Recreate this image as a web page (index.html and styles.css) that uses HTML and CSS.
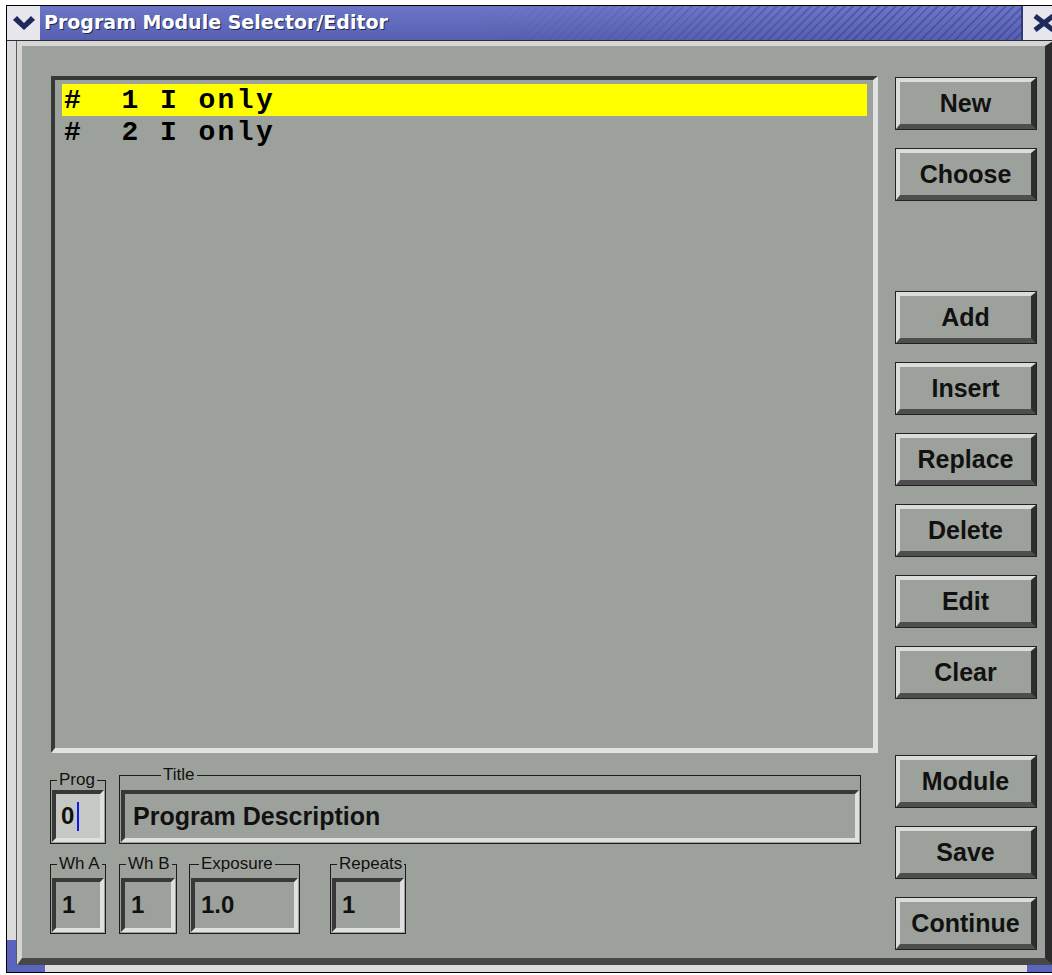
FILE: index.html
```html
<!DOCTYPE html>
<html lang="en">
<head>
<meta charset="utf-8">
<title>Program Module Selector/Editor</title>
<link rel="stylesheet" href="styles.css">
</head>
<body>
<div class="window">
  <div class="titlebar">
    <div class="tb-btn tb-menu">
      <svg width="22" height="14" viewBox="0 0 22 14"><path d="M0 4 4 0 11 7 18 0 22 4 11 14Z" fill="#1e2a5e"/></svg>
    </div>
    <div class="tb-title">Program Module Selector/Editor</div>
    <div class="tb-btn tb-close">
      <svg width="24" height="20" viewBox="0 0 24 20"><path d="M3 3 21 17M21 3 3 17" stroke="#1e2a5e" stroke-width="5"/></svg>
    </div>
  </div>
  <div class="frame">
    <span class="grip grip-bl"></span>
    <span class="grip grip-br"></span>
    <div class="dialog">
      <div class="main-col">
        <div class="listbox">
          <div class="row selected">#  1 I only</div>
          <div class="row">#  2 I only</div>
        </div>
        <div class="field-row row-top">
          <fieldset class="group g-prog">
            <legend>Prog</legend>
            <div class="entry focus">0<span class="caret"></span></div>
          </fieldset>
          <fieldset class="group g-title">
            <legend>Title</legend>
            <div class="entry entry-title">Program Description</div>
          </fieldset>
        </div>
        <div class="field-row row-bottom">
          <fieldset class="group g-wha">
            <legend>Wh A</legend>
            <div class="entry">1</div>
          </fieldset>
          <fieldset class="group g-whb">
            <legend>Wh B</legend>
            <div class="entry">1</div>
          </fieldset>
          <fieldset class="group g-exposure">
            <legend>Exposure</legend>
            <div class="entry">1.0</div>
          </fieldset>
          <fieldset class="group g-repeats">
            <legend>Repeats</legend>
            <div class="entry">1</div>
          </fieldset>
        </div>
      </div>
      <div class="btn-col">
        <button class="btn">New</button>
        <button class="btn">Choose</button>
        <button class="btn gap-lg">Add</button>
        <button class="btn">Insert</button>
        <button class="btn">Replace</button>
        <button class="btn">Delete</button>
        <button class="btn">Edit</button>
        <button class="btn">Clear</button>
        <button class="btn gap-md">Module</button>
        <button class="btn">Save</button>
        <button class="btn">Continue</button>
      </div>
    </div>
  </div>
</div>
</body>
</html>
```

FILE: styles.css
```css
html, body {
  margin: 0;
  background: #ffffff;
  overflow: hidden;
}

body {
  font-family: "Liberation Sans", Arial, sans-serif;
  color: #111;
}

/* window shell */
.window {
  margin: 5px 0 0 6px;
  width: 1046px;
  border: 1px solid #000;
  border-right: 0;
}

.titlebar {
  display: flex;
  height: 34px;
  border-bottom: 1px solid #2c2c3c;
  overflow: hidden;
}

.tb-btn {
  background: #e6e6ec;
  display: flex;
  align-items: center;
}

.tb-menu {
  width: 33px;
  justify-content: center;
}

.tb-close {
  width: 30px;
  padding-left: 9px;
  box-sizing: border-box;
  overflow: hidden;
}

.tb-close svg {
  flex: none;
}

.tb-title {
  flex: 1;
  position: relative;
  background: linear-gradient(#6c76c6, #5760b0);
  border-right: 2px solid #323a78;
  padding-left: 4px;
  color: #fff;
  font: bold 19px/33px "DejaVu Sans", sans-serif;
  text-shadow: 1px 1px 0 #232850;
  overflow: hidden;
}

/* diagonal hatch fading in towards the right end of the bar */
.tb-title::after {
  content: "";
  position: absolute;
  inset: 0;
  background: repeating-linear-gradient(135deg, transparent 0 4px, rgba(40, 48, 120, 0.35) 4px 6px);
  -webkit-mask-image: linear-gradient(90deg, transparent 45%, #000 85%);
  mask-image: linear-gradient(90deg, transparent 45%, #000 85%);
}

.frame {
  position: relative;
  display: flex;
  background: #dcdcdc;
  padding: 0 0 7px 10px;
}

.grip {
  position: absolute;
  bottom: 0;
  box-sizing: border-box;
}

.grip-bl {
  left: 0;
  width: 38px;
  height: 32px;
  border-left: 9px solid #5b65c0;
  border-bottom: 7px solid #5b65c0;
}

.grip-br {
  right: 0;
  width: 26px;
  height: 7px;
  background: #5b65c0;
}

/* dialog body */
.dialog {
  flex: 1;
  height: 924px;
  box-sizing: border-box;
  display: flex;
  gap: 17px;
  background: #9da19b;
  border-style: solid;
  border-width: 5px 8px 7px 5px;
  border-color: #d6d6d4 #2c2c2c #474747 #d6d6d4;
  box-shadow: -1px 0 0 #5c5c5c;
  padding: 30px 8px 0 28px;
}

.main-col {
  width: 828px;
  display: flex;
  flex-direction: column;
}

.listbox {
  margin-left: 1px;
  height: 677px;
  box-sizing: border-box;
  border-style: solid;
  border-width: 4px 5px 5px 4px;
  border-color: #383838 #e2e2e2 #e2e2e2 #383838;
  padding: 4px 6px 0 7px;
  font: bold 28px/30px "Liberation Mono", "Courier New", monospace;
  letter-spacing: 2.4px;
  color: #000;
}

.row {
  height: 32px;
  box-sizing: border-box;
  padding: 2px 0 0 2px;
  white-space: pre;
}

.row.selected {
  background: #ffff00;
}

/* labelled entry groups */
.field-row {
  display: flex;
  align-items: flex-end;
}

.row-top {
  margin-top: 12px;
  gap: 13px;
}

.row-bottom {
  margin-top: 10px;
}

.group {
  margin: 0;
  padding: 0 1px 1px;
  border: 1px solid #1c1c1c;
  min-width: 0;
  box-sizing: border-box;
}

.group legend {
  font: 17px/20px "Liberation Sans", Arial, sans-serif;
  padding: 0 2px;
  margin-left: 5px;
  color: #111;
}

.row-bottom .group {
  padding-top: 4px;
}

.g-prog { width: 56px; }
.g-title { width: 742px; padding-top: 5px; }
.g-title legend { margin-left: 40px; }
.g-wha { width: 56px; }
.g-whb { width: 58px; margin-left: 13px; }
.g-exposure { width: 111px; margin-left: 12px; }
.g-exposure legend { margin-left: 8px; }
.g-repeats { width: 76px; margin-left: 30px; }

.entry {
  box-sizing: border-box;
  border-style: solid;
  border-width: 4px;
  border-color: #383838 #e0e0e0 #e0e0e0 #383838;
  display: flex;
  align-items: center;
  padding-left: 6px;
  font: bold 24px "Liberation Sans", Arial, sans-serif;
  color: #111;
  white-space: nowrap;
  overflow: hidden;
}

.row-top .entry { height: 52px; }
.row-bottom .entry { height: 54px; }

.entry.focus {
  background: #c6c8c3;
  padding-left: 5px;
}

.entry-title {
  padding-left: 8px;
  font-size: 25px;
}

.caret {
  display: inline-block;
  width: 2px;
  height: 29px;
  margin-left: 3px;
  background: #1515ee;
}

/* push-button column */
.btn-col {
  flex: 1;
  display: flex;
  flex-direction: column;
  gap: 20px;
  padding: 2px 1px 0;
}

.btn {
  appearance: none;
  margin: 0;
  padding: 0;
  height: 51px;
  box-sizing: border-box;
  border-style: solid;
  border-width: 4px 5px 5px 4px;
  border-color: #dcdcdc #2e2e2e #4e4e4e #dcdcdc;
  box-shadow: 0 0 0 1px #222;
  background: #9da19b;
  font: bold 25px "Liberation Sans", Arial, sans-serif;
  color: #111;
  display: flex;
  align-items: center;
  justify-content: center;
}

.btn.gap-lg { margin-top: 72px; }
.btn.gap-md { margin-top: 38px; }
```
